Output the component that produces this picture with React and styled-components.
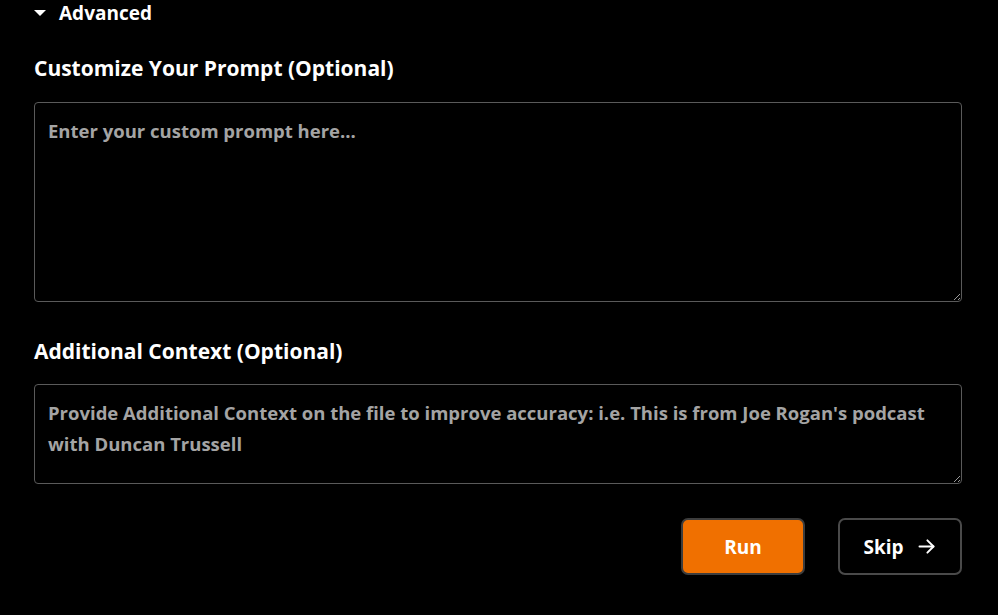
import React from 'react';
import styled, { createGlobalStyle } from 'styled-components';

const GlobalStyle = createGlobalStyle`
  html, body {
    margin: 0;
    padding: 0;
    background: #000;
    height: 100%;
  }
  body {
    font-family: "Open Sans", "Noto Sans", sans-serif;
    color: #fff;
  }
`;

const Page = styled.div`
  display: flex;
  flex-direction: column;
  padding: 0 36px 0 34px;
  background: #000;
  min-height: 615px;
  box-sizing: border-box;
`;

const Toggle = styled.button`
  display: flex;
  align-items: center;
  gap: 13px;
  height: 25px;
  padding: 0;
  background: none;
  border: none;
  color: #fff;
  font-family: inherit;
  font-size: 19px;
  font-weight: 700;
  cursor: pointer;
  align-self: flex-start;
`;

const Caret = styled.span`
  width: 0;
  height: 0;
  border-left: 6px solid transparent;
  border-right: 6px solid transparent;
  border-top: 6px solid #fff;
`;

const Label = styled.label`
  display: block;
  font-size: 21px;
  font-weight: 700;
  line-height: 28px;
  margin-top: ${p => p.$top}px;
`;

const TextArea = styled.textarea`
  display: block;
  box-sizing: border-box;
  width: 100%;
  height: ${p => p.$height}px;
  margin-top: ${p => p.$top}px;
  padding: 12px 13px;
  background: #000;
  border: 1px solid #5a5a5a;
  border-radius: 4px;
  color: #fff;
  font-family: inherit;
  font-size: 18.5px;
  font-weight: 700;
  line-height: 31px;
  &::placeholder {
    color: #a4a4a4;
  }
  &:focus {
    outline: none;
  }
`;

const Actions = styled.div`
  display: flex;
  justify-content: flex-end;
  gap: 33px;
  margin-top: 34px;
`;

const Button = styled.button`
  display: flex;
  align-items: center;
  justify-content: center;
  gap: 12px;
  width: 124px;
  height: 57px;
  box-sizing: border-box;
  border-radius: 7px;
  border: 2px solid ${p => (p.$primary ? '#3d3d3d' : '#4a4a4a')};
  background: ${p => (p.$primary ? '#f07000' : '#000')};
  color: #fff;
  font-family: inherit;
  font-size: 19px;
  font-weight: 700;
  cursor: pointer;
`;

const Arrow = () => (
  <svg width="21" height="21" viewBox="0 0 24 24" fill="none" stroke="#fff" strokeWidth="2.2" strokeLinecap="round" strokeLinejoin="round">
    <path d="M4 12h16" />
    <path d="M13 5l7 7-7 7" />
  </svg>
);

export default function App() {
  return (
    <>
      <GlobalStyle />
      <Page>
        <Toggle>
          <Caret />
          Advanced
        </Toggle>
        <Label $top={29}>Customize Your Prompt (Optional)</Label>
        <TextArea $top={20} $height={200} placeholder="Enter your custom prompt here..." />
        <Label $top={35}>Additional Context (Optional)</Label>
        <TextArea
          $top={19}
          $height={100}
          placeholder="Provide Additional Context on the file to improve accuracy: i.e. This is from Joe Rogan's podcast with Duncan Trussell"
        />
        <Actions>
          <Button $primary>Run</Button>
          <Button>
            Skip
            <Arrow />
          </Button>
        </Actions>
      </Page>
    </>
  );
}
